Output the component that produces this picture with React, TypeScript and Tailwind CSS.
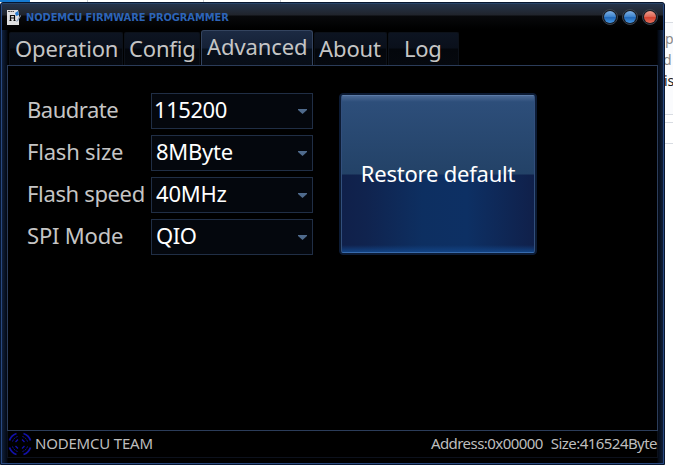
import React from "react";

const tabs = [
  { label: "Operation", box: "w-[114px] pl-[5px]", text: "tracking-[-0.15px]" },
  { label: "Config", box: "w-[76px] pl-[4px]", text: "tracking-[-0.15px]" },
  { label: "Advanced", box: "w-[112px] pl-[5px]", text: "tracking-[-0.1px]", active: true },
  { label: "About", box: "w-[73px] pl-[4px]", text: "tracking-[-0.1px]" },
  { label: "Log", box: "w-[71px] pl-[15px]", text: "tracking-[-0.3px]" },
];

const fields = [
  { label: "Baudrate", value: "115200", pad: "pl-[2px]", labelText: "tracking-[-0.5px]", valueText: "tracking-[-0.45px]" },
  { label: "Flash size", value: "8MByte", pad: "pl-[4px]", labelText: "tracking-[-0.2px]", valueText: "tracking-[-0.25px]" },
  { label: "Flash speed", value: "40MHz", pad: "pl-[4px]", labelText: "tracking-[-0.35px]", valueText: "tracking-[-0.2px]" },
  { label: "SPI Mode", value: "QIO", pad: "pl-[4px]", labelText: "tracking-[-0.2px]", valueText: "tracking-[-0.5px]" },
];

function AppIcon() {
  return (
    <svg width="15" height="15" viewBox="0 0 15 15" className="shrink-0">
      <path d="M0 0h11l1 4v11H0z" fill="#dedfe0" />
      <path d="M1 1.500h2M3.500 1.500h2M6 1.500h1" stroke="#555" strokeWidth="1" />
      <path d="M3.500 10.500V5.500h4V10.500M3.500 8h4M2.500 10.500h2M6.500 10.500h2" fill="none" stroke="#080808" strokeWidth="1.200" />
      <path d="M8 3l3-2 1 4-3 1z" fill="#267dd4" />
      <path d="M13.500 5l-3.500 5-1 2 2-1 3-5z" fill="#8aa0ba" />
    </svg>
  );
}

function Orb({ red = false }: { red?: boolean }) {
  return (
    <span className="flex size-4 items-center justify-center rounded-full border border-[#3b4350] bg-[#171a20]">
      <span
        className={
          red
            ? "size-3 rounded-full bg-[linear-gradient(#ee9c8c_0%,#e06a58_45%,#d3422f_55%,#e8705c_100%)]"
            : "size-3 rounded-full bg-[linear-gradient(#7fb0e4_0%,#4287cf_45%,#2268b8_55%,#4597e4_100%)]"
        }
      />
    </span>
  );
}

function TeamLogo() {
  return (
    <svg width="24" height="24" viewBox="0 0 24 24" fill="none" stroke="#1212a8" className="shrink-0">
      <path d="M1.500 8.500A11 11 0 0 1 8.500 1.500M15.500 1.500A11 11 0 0 1 22.500 8.500M22.500 15.500A11 11 0 0 1 15.500 22.500M8.500 22.500A11 11 0 0 1 1.500 15.500" strokeWidth="1.800" />
      <path d="M4.500 9.500A8 8 0 0 1 9.500 4.500M14.500 4.500A8 8 0 0 1 19.500 9.500M19.500 14.500A8 8 0 0 1 14.500 19.500M9.500 19.500A8 8 0 0 1 4.500 14.500" strokeWidth="1" strokeDasharray="2 .7" />
      <path d="M7.500 10L10 7.500M14 7.500L16.500 10M16.500 14L14 16.500M10 16.500L7.500 14" strokeWidth="1.300" />
    </svg>
  );
}

export default function App() {
  return (
    <div className="flex h-[471px] w-[673px] flex-col overflow-hidden bg-white font-['Noto_Sans',sans-serif]">
      <div className="flex h-[2px] shrink-0">
        <div className="w-[30px] bg-[#167bd2]" />
        <div className="w-[58px] border-r border-[#c9cdd3]" />
        <div className="w-[116px] border-r border-[#c9cdd3]" />
        <div className="w-[77px] border-r border-[#c9cdd3]" />
      </div>
      <div className="flex h-[463px] shrink-0">
        <div className="flex w-[665px] shrink-0 flex-col rounded-t-[3px] border border-[#07162f] bg-[#060f20]">
          <div className="flex h-[461px] flex-col rounded-t-[2px] border border-t-[#294467] border-r-[#294980] border-b-[#294980] border-l-[#294980] bg-[linear-gradient(90deg,#101f39_0,#030914_5px,#000_6px,#000_655px,#030914_656px,#101f39_661px)]">
            <header className="flex h-[26px] shrink-0 items-center bg-[linear-gradient(#25334a_0,#20242b_11px,#08090b_12px,#000_25px)] pl-[5px] pr-[5px]">
              <AppIcon />
              <h1 className="ml-[4px] pt-px font-['DejaVu_Sans_Condensed','DejaVu_Sans',sans-serif] text-[11px] font-bold leading-[14px] [font-stretch:condensed] whitespace-nowrap tracking-[-0.08px] text-[#2d64b7]">
                NODEMCU FIRMWARE PROGRAMMER
              </h1>
              <div className="-mt-px ml-auto flex gap-[4px]">
                <Orb />
                <Orb />
                <Orb red />
              </div>
            </header>
            <nav className="flex h-[35px] shrink-0 items-end pl-[7px]">
              {tabs.map((t) => (
                <div
                  key={t.label}
                  className={
                    t.active
                      ? "mr-px h-[35px] rounded-t-[3px] border border-b-0 border-[#34445f] bg-[linear-gradient(#1c2a43_0,#152136_17px,#07101c_18px,#080d16_100%)] " + t.box
                      : "mr-px h-[33px] rounded-t-[2px] border border-b-0 border-[#0c1119] bg-[linear-gradient(#0d1421_0,#0a101b_15px,#04070c_16px,#05080e_100%)] " + t.box
                  }
                >
                  <span className={"block whitespace-nowrap text-[22px] leading-[30px] text-[#c5c5c5] " + t.text}>{t.label}</span>
                </div>
              ))}
            </nav>
            <main className="mx-[5px] flex h-[366px] shrink-0 border border-[#2b3c59] bg-black pl-[19px] pt-[27px]">
              <div className="flex w-[286px] flex-col gap-[6px]">
                {fields.map((f) => (
                  <div key={f.label} className="flex h-[36px] items-center">
                    <label className={"w-[124px] pb-[3px] whitespace-nowrap text-[22px] leading-[33px] text-[#c5c5c5] " + f.labelText}>{f.label}</label>
                    <div className={"flex h-[36px] w-[162px] items-center border border-[#202e45] bg-[#04070d] pr-[5px] " + f.pad}>
                      <span className={"pb-[3px] text-[22px] leading-[31px] text-white " + f.valueText}>{f.value}</span>
                      <svg width="9" height="5" viewBox="0 0 9 5" className="ml-auto">
                        <path d="M0 0h9v1L4.500 5 0 1z" fill="#4f6a8c" />
                      </svg>
                    </div>
                  </div>
                ))}
              </div>
              <button className="ml-[26px] flex h-[162px] w-[198px] items-center justify-center rounded-[4px] border border-[#0c1b34] bg-[#0c1b34] p-px text-[22px] tracking-[-0.22px] text-white">
                <span className="flex h-[158px] w-[194px] items-center justify-center rounded-[2px] border border-x-[#324f7c] border-t-[#5c7ca8] border-b-[#386bad] bg-[linear-gradient(#4a6893_0,#2d4e7a_6px,#234267_78px,transparent_79px,transparent_149px,#124384_100%),linear-gradient(90deg,#10204a_0,#10234e_12%,#0d2f61_42%,#0d3064_65%,#10204a_100%)] pb-[2px]">
                  Restore default
                </span>
              </button>
            </main>
            <footer className="mx-[5px] flex h-[27px] shrink-0 items-center border border-t-0 border-[#0c111c] bg-black text-[15px] text-[#bdbdbd]">
              <TeamLogo />
              <span className="ml-[3px] pb-[2px] whitespace-nowrap tracking-[-0.2px]">NODEMCU TEAM</span>
              <span className="ml-auto pb-[2px] whitespace-nowrap tracking-[-0.55px]">Address:0x00000</span>
              <span className="ml-[8px] pb-[2px] whitespace-nowrap tracking-[-0.55px]">Size:416524Byte</span>
            </footer>
          </div>
        </div>
        <aside className="flex w-[8px] flex-col overflow-hidden pt-[20px] text-[14px] text-[#8a8a8a]">
          <div className="h-[93px] shrink-0 border-y border-[#d8dce2] bg-[#fafbfd] leading-[21px]">
            <div className="mt-[5px]">p</div>
            <div className="-ml-[2px]">d</div>
            <div className="-ml-px text-[#222]">is</div>
          </div>
          <div className="h-[8px] shrink-0 border-b border-[#d8dce2]" />
          <div className="h-[21px] shrink-0 border-b border-[#d8dce2]" />
        </aside>
      </div>
    </div>
  );
}
